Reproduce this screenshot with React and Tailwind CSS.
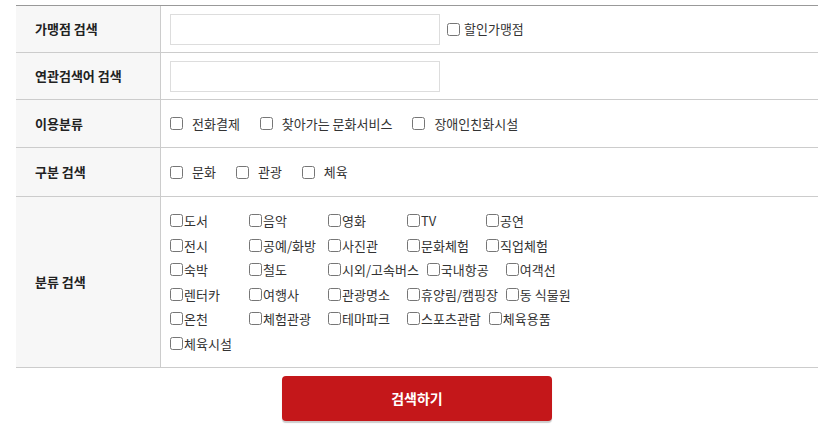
import React from 'react';

const FONT = { fontFamily: '"Noto Sans CJK KR", "Noto Sans", sans-serif' };

const categories = [
  '도서', '음악', '영화', 'TV', '공연',
  '전시', '공예/화방', '사진관', '문화체험', '직업체험',
  '숙박', '철도', '시외/고속버스', '국내항공', '여객선',
  '렌터카', '여행사', '관광명소', '휴양림/캠핑장', '동 식물원',
  '온천', '체험관광', '테마파크', '스포츠관람', '체육용품',
  '체육시설',
];

function Check({ label, gap = 'gap-[9px]', className = '' }) {
  return (
    <label className={`inline-flex items-center ${gap} text-[13px] text-[#333] cursor-pointer ${className}`}>
      <input type="checkbox" className="m-0 w-[13px] h-[13px] shrink-0" />
      <span>{label}</span>
    </label>
  );
}

function Row({ label, children, height, last }) {
  return (
    <div className={`flex ${last ? '' : 'border-b border-[#cccccc]'}`} style={{ minHeight: height }}>
      <div className="w-[145px] shrink-0 bg-[#f7f7f7] border-r border-[#cccccc] flex items-center pl-[19px] text-[13px] font-bold text-[#222]">
        {label}
      </div>
      <div className="flex-1 flex items-center pl-[9px]">{children}</div>
    </div>
  );
}

export default function App() {
  return (
    <div className="w-[835px] h-[435px] bg-white pt-[5px] pl-[16px] pr-[17px]" style={FONT}>
      <div className="border-t border-[#999999] border-b border-b-[#cccccc]">
        <Row label="가맹점 검색" height={47}>
          <input type="text" className="w-[270px] h-[31px] border border-[#dddddd] outline-none" />
          <Check label="할인가맹점" gap="gap-[4px]" className="ml-[7px]" />
        </Row>
        <Row label="연관검색어 검색" height={47}>
          <input type="text" className="w-[270px] h-[31px] border border-[#dddddd] outline-none" />
        </Row>
        <Row label="이용분류" height={48}>
          <div className="flex items-center gap-[20px]">
            <Check label="전화결제" />
            <Check label="찾아가는 문화서비스" />
            <Check label="장애인친화시설" />
          </div>
        </Row>
        <Row label="구분 검색" height={49}>
          <div className="flex items-center gap-[20px]">
            <Check label="문화" />
            <Check label="관광" />
            <Check label="체육" />
          </div>
        </Row>
        <Row label="분류 검색" height={170} last>
          <div className="flex flex-wrap w-[420px] py-[11px]">
            {categories.map((c) => (
              <div key={c} className="min-w-[71px] mr-[8px] h-[24.5px] flex items-center">
                <Check label={c} gap="gap-[1px]" />
              </div>
            ))}
          </div>
        </Row>
      </div>
      <div className="flex justify-center pt-[8px]">
        <button className="w-[270px] h-[45px] bg-[#c4171a] text-white font-bold text-[14px] rounded-[4px] shadow-[0_2px_1px_rgba(0,0,0,0.2)]">
          검색하기
        </button>
      </div>
    </div>
  );
}
